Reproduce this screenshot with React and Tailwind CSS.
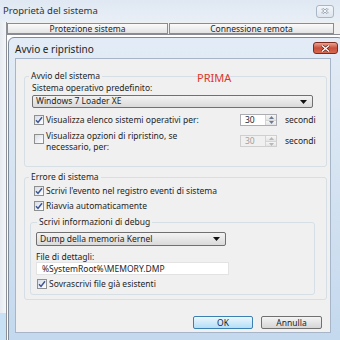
import React from 'react';

const Check = ({ checked }) => (
  <span className="w-[10px] h-[10px] shrink-0 border border-[#8e8f8f] bg-linear-to-br from-[#d8dde6] to-white flex items-center justify-center">
    {checked && (
      <svg width="8" height="8" viewBox="0 0 8 8">
        <path d="M1 4.3 L3 6.4 L7 1.2" stroke="#3d5596" strokeWidth="1.5" fill="none" />
      </svg>
    )}
  </span>
);

const Spin = ({ disabled }) => (
  <div
    className={
      disabled
        ? 'flex w-[37px] h-[12px] border border-[#cfcfcf] bg-[#f0f0f0] text-[#a0a0a0]'
        : 'flex w-[37px] h-[12px] border border-[#abadb3] bg-white text-[#1e1e1e]'
    }
  >
    <span className="flex-1 pl-[4px] leading-[10px]">30</span>
    <div className="w-[11px] flex flex-col border-l border-[#d4d4d4]">
      <span className="flex-1 flex items-center justify-center bg-linear-to-b from-[#f6f6f6] to-[#e4e4e4] border-b border-[#d4d4d4]">
        <svg width="5" height="3" viewBox="0 0 5 3"><path d="M0 3h5L2.5 0z" fill={disabled ? '#b8b8b8' : '#6b7c92'} /></svg>
      </span>
      <span className="flex-1 flex items-center justify-center bg-linear-to-b from-[#f6f6f6] to-[#e4e4e4]">
        <svg width="5" height="3" viewBox="0 0 5 3"><path d="M0 0h5L2.5 3z" fill={disabled ? '#b8b8b8' : '#6b7c92'} /></svg>
      </span>
    </div>
  </div>
);

const Select = ({ children, w }) => (
  <div className={`${w} flex items-center justify-between border border-[#707070] rounded-[2px] bg-linear-to-b from-[#f3f3f3] to-[#dadada] pl-[3px] pr-[5px]`}>
    <span>{children}</span>
    <svg width="7" height="4" viewBox="0 0 7 4"><path d="M0 0h7L3.5 4z" fill="#111" /></svg>
  </div>
);

const Group = ({ title, className, children, legendClass }) => (
  <fieldset className={`border border-[#d5dfe5] rounded-[3px] ${className}`}>
    <legend className={`px-[2px] leading-[12px] ${legendClass}`}>{title}</legend>
    {children}
  </fieldset>
);

const CloseRed = () => (
  <div className="w-[25px] h-[12px] rounded-[3px] border border-[#7e2b1f] bg-linear-to-b from-[#e8a493] via-[#c8503a] to-[#d76a52] flex items-center justify-center">
    <svg width="9" height="7" viewBox="0 0 9 7">
      <path d="M1 0.5 L8 6.5 M8 0.5 L1 6.5" stroke="#5a1a10" strokeWidth="2.6" />
      <path d="M1 0.5 L8 6.5 M8 0.5 L1 6.5" stroke="#ffffff" strokeWidth="1.4" />
    </svg>
  </div>
);

export default function App() {
  return (
    <div className="relative w-[340px] h-[340px] overflow-hidden bg-[#f0f0f0] text-[#1e1e1e] font-['Noto_Sans',sans-serif] text-[8.5px]">
      {/* finestra di sfondo */}
      <div className="h-[22px] flex items-center justify-between pl-[3px] pr-[6px] bg-linear-to-b from-[#dfe8f3] to-[#e9eff6]">
        <span className="text-[9.5px] text-[#333]">Proprietà del sistema</span>
        <div className="w-[18px] h-[13px] rounded-[3px] border border-[#a9b6c6] bg-linear-to-b from-[#f3f6fa] to-[#dfe6ee] flex items-center justify-center">
          <svg width="8" height="6" viewBox="0 0 8 6">
            <path d="M1 0.5 L7 5.5 M7 0.5 L1 5.5" stroke="#8a97a8" strokeWidth="2.2" />
            <path d="M1 0.5 L7 5.5 M7 0.5 L1 5.5" stroke="#ffffff" strokeWidth="1" />
          </svg>
        </div>
      </div>
      <div className="flex h-[318px]">
        <div className="w-[7px] flex flex-col border-r border-[#8d9096]">
          <div className="flex-1 bg-linear-to-r from-[#e6ebf1] to-[#f4f6f8]" />
          <div className="h-[27px] bg-[#c8e1f5]" />
        </div>
        <div className="flex-1 flex flex-col">
          <div className="flex h-[11px] mt-[1px]">
            <div className="w-[161px] border border-[#898c95] bg-linear-to-b from-[#fbfbfb] to-[#e3e3e3] flex items-center justify-center leading-[9px]">Protezione sistema</div>
            <div className="w-[165px] ml-[1px] border border-[#898c95] bg-linear-to-b from-[#fbfbfb] to-[#e3e3e3] flex items-center justify-center leading-[9px]">Connessione remota</div>
          </div>
          <div className="flex-1 border-t border-[#898c95] bg-white" />
        </div>
      </div>

      {/* finestra di dialogo */}
      <div className="absolute left-[8px] top-[37px] w-[336px] h-[304px] rounded-t-[6px] border border-[#7f8b99] bg-linear-to-b from-[#e3ecf6] via-[#d4e2f1] to-[#c4d9ee] flex flex-col">
        <div className="h-[20px] flex items-center justify-between pl-[6px] pr-[5px]">
          <span className="text-[10px] text-[#1e1e1e] mt-[2px]">Avvio e ripristino</span>
          <CloseRed />
        </div>
        <div className="ml-[6px] w-[316px] h-[275px] border border-[#a6b6c8] bg-[#f0f0f0] flex flex-col">
          <div className="relative">
            <span className="absolute left-[181px] top-[13px] text-[11px] text-[#e0352b] leading-[12px]">PRIMA</span>
          </div>
          <Group title="Avvio del sistema" className="ml-[8px] mt-[11px] w-[303px] h-[97px] px-[7px]" legendClass="-ml-[3px]">
            <div className="leading-[12px]">Sistema operativo predefinito:</div>
            <Select w="w-[281px] h-[13px] mt-[1px]">Windows 7 Loader XE</Select>
            <div className="flex items-center h-[12px] mt-[6px]">
              <div className="w-[208px] flex items-center gap-[2px] pl-[2px]">
                <Check checked />
                <span>Visualizza elenco sistemi operativi per:</span>
              </div>
              <Spin />
              <span className="ml-[8px]">secondi</span>
            </div>
            <div className="flex items-start mt-[4px]">
              <div className="w-[208px] flex items-start gap-[2px] pl-[2px]">
                <span className="mt-[4px]"><Check /></span>
                <span className="leading-[11px]">Visualizza opzioni di ripristino, se<br />necessario, per:</span>
              </div>
              <div className="mt-[5px] flex items-center">
                <Spin disabled />
                <span className="ml-[8px]">secondi</span>
              </div>
            </div>
          </Group>
          <Group title="Errore di sistema" className="ml-[8px] mt-[4px] w-[303px] h-[129px] px-[5px]" legendClass="-ml-[1px]">
            <div className="flex items-center gap-[2px] pl-[4px] mt-[2px] h-[12px]">
              <Check checked />
              <span>Scrivi l'evento nel registro eventi di sistema</span>
            </div>
            <div className="flex items-center gap-[2px] pl-[4px] mt-[3px] h-[12px]">
              <Check checked />
              <span>Riavvia automaticamente</span>
            </div>
            <Group title="Scrivi informazioni di debug" className="mt-[4px] w-[285px] h-[79px] px-[5px]" legendClass="ml-[1px]">
              <Select w="w-[190px] h-[14px] mt-[4px]">Dump della memoria Kernel</Select>
              <div className="leading-[10px] mt-[6px]">File di dettagli:</div>
              <div className="w-[193px] h-[13px] bg-white border border-[#e3e3e3] pl-[5px] leading-[11px]">%SystemRoot%\MEMORY.DMP</div>
              <div className="flex items-center gap-[2px] pl-[1px] mt-[3px] h-[12px]">
                <Check checked />
                <span>Sovrascrivi file già esistenti</span>
              </div>
            </Group>
          </Group>
          <div className="flex justify-end gap-[8px] mt-[16px] pr-[8px]">
            <button className="w-[60px] h-[13px] rounded-[2px] border border-[#3c7fb1] bg-linear-to-b from-[#ecf7fd] to-[#b3dff6] leading-[11px]">OK</button>
            <button className="w-[61px] h-[13px] rounded-[2px] border border-[#707070] bg-linear-to-b from-[#f4f4f4] to-[#d6d6d6] leading-[11px]">Annulla</button>
          </div>
        </div>
      </div>
    </div>
  );
}
